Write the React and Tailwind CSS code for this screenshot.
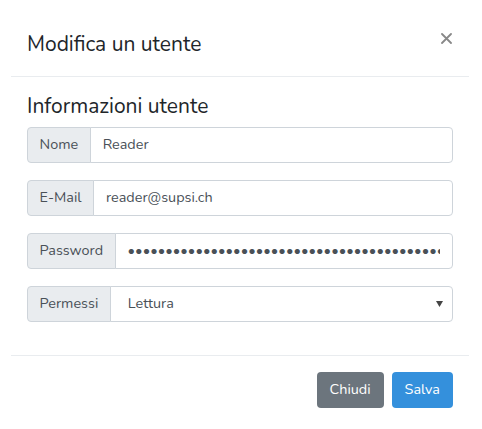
import React from "react";

const font = { fontFamily: "Nunito, Lato, 'Open Sans', sans-serif" };

function Group({ label, children }) {
  return (
    <div className="flex h-9 w-full">
      <span className="flex items-center rounded-l-[4px] border border-[#ced4da] bg-[#e9ecef] px-[11.5px] text-[14.4px] text-[#495057]">
        {label}
      </span>
      <div className="relative -ml-px flex flex-1 items-center rounded-r-[4px] border border-[#ced4da] bg-white">
        {children}
      </div>
    </div>
  );
}

export default function App() {
  return (
    <div className="h-[429px] w-[482px] bg-white text-[#212529]" style={font}>
      <div className="ml-[11px] w-[458px]">
        <div className="flex h-[77px] items-start border-b border-[#e9ecef] px-4">
          <h5 className="pt-[32px] text-[21px] leading-[25px]">Modifica un utente</h5>
          <button className="ml-auto mt-[33px] mr-[1px] text-[#888]">
            <svg width="11" height="11" viewBox="0 0 11 11">
              <path d="M1 1 L10 10 M10 1 L1 10" stroke="currentColor" strokeWidth="1.8" strokeLinecap="round" />
            </svg>
          </button>
        </div>

        <div className="px-4 pt-[17px] pb-[33px]">
          <h4 className="mb-[8px] text-[21px] leading-[25px]">Informazioni utente</h4>
          <div className="flex flex-col gap-[17px]">
            <Group label="Nome">
              <input
                readOnly
                value="Reader"
                className="w-full bg-transparent px-3 text-[14.4px] text-[#495057] outline-none"
              />
            </Group>
            <Group label="E-Mail">
              <input
                readOnly
                value="reader@supsi.ch"
                className="w-full bg-transparent px-3 text-[14.4px] text-[#495057] outline-none"
              />
            </Group>
            <Group label="Password">
              <input
                readOnly
                type="password"
                value="readerreaderreaderreaderreaderreaderreaderreaderreaderreader"
                className="w-full bg-transparent px-3 text-[14.4px] text-[#495057] outline-none"
              />
            </Group>
            <Group label="Permessi">
              <select className="h-full w-full appearance-none bg-transparent pl-[17px] pr-8 text-[14.4px] text-[#495057] outline-none">
                <option>Lettura</option>
              </select>
              <svg className="pointer-events-none absolute right-[9px] top-[14px]" width="7" height="6" viewBox="0 0 7 6">
                <path d="M0 0 H7 L3.5 6 Z" fill="#444" />
              </svg>
            </Group>
          </div>
        </div>

        <div className="flex justify-end gap-2 border-t border-[#e9ecef] px-4 pt-4">
          <button className="h-9 rounded-[4px] bg-[#6c757d] px-[13px] text-[14.4px] text-white">Chiudi</button>
          <button className="h-9 rounded-[4px] bg-[#3490dc] px-[13px] text-[14.4px] text-white">Salva</button>
        </div>
      </div>
    </div>
  );
}
